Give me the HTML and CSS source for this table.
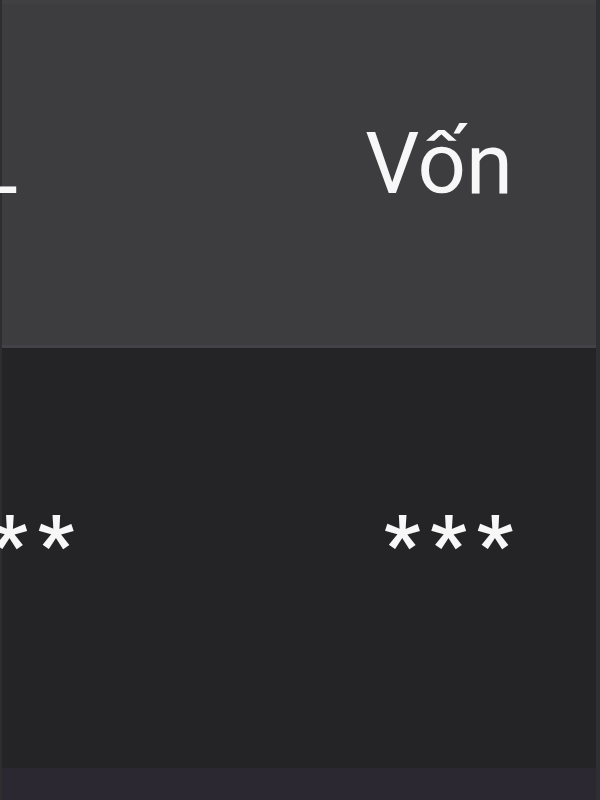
FILE: index.html
```html
<!DOCTYPE html>
<html lang="vi">
<head>
  <meta charset="UTF-8" />
  <meta name="viewport" content="width=device-width, initial-scale=1.0" />
  <title>Danh mục</title>
  <link rel="stylesheet" href="styles.css">
</head>
<body>
  <div class="table">
    <div class="row head">
      <div class="cell first">SL</div>
      <div class="cell last">Vốn</div>
    </div>
    <div class="row body">
      <div class="cell first"><span class="mask">***</span></div>
      <div class="cell last"><span class="mask">***</span></div>
    </div>
    <div class="row next"></div>
  </div>
</body>
</html>
```

FILE: styles.css
```css
* {
  box-sizing: border-box;
  margin: 0;
  padding: 0;
}

body {
  background: #242427;
  font-family: Roboto, "Noto Sans", sans-serif;
  color: #f7f7f7;
  overflow: hidden;
}

.table {
  width: 600px;
  height: 800px;
  display: flex;
  flex-direction: column;
  border-left: 2px solid #2e2e31;
  border-right: 4px solid #2f2f33;
}

.row {
  display: grid;
  grid-template-columns: 1fr 1fr;
  align-items: center;
  font-size: 85px;
  line-height: 1.17;
  white-space: nowrap;
}

.head {
  height: 348px;
  background: #3d3d40;
  border-top: 4px solid #404043;
  border-bottom: 3px solid #434249;
  padding-bottom: 20px;
}

.body {
  height: 420px;
  background: #242427;
  padding-bottom: 29px;
}

.next {
  flex: 1;
  background: #2b2832;
}

.cell.first {
  margin-left: -57px;
  text-align: left;
}

.head .cell.first {
  margin-left: -80px;
}

.cell.last {
  text-align: right;
  padding-right: 83px;
}

.mask {
  font-weight: 700;
  font-size: 80px;
  letter-spacing: 10px;
  margin-right: -10px;
}
```
